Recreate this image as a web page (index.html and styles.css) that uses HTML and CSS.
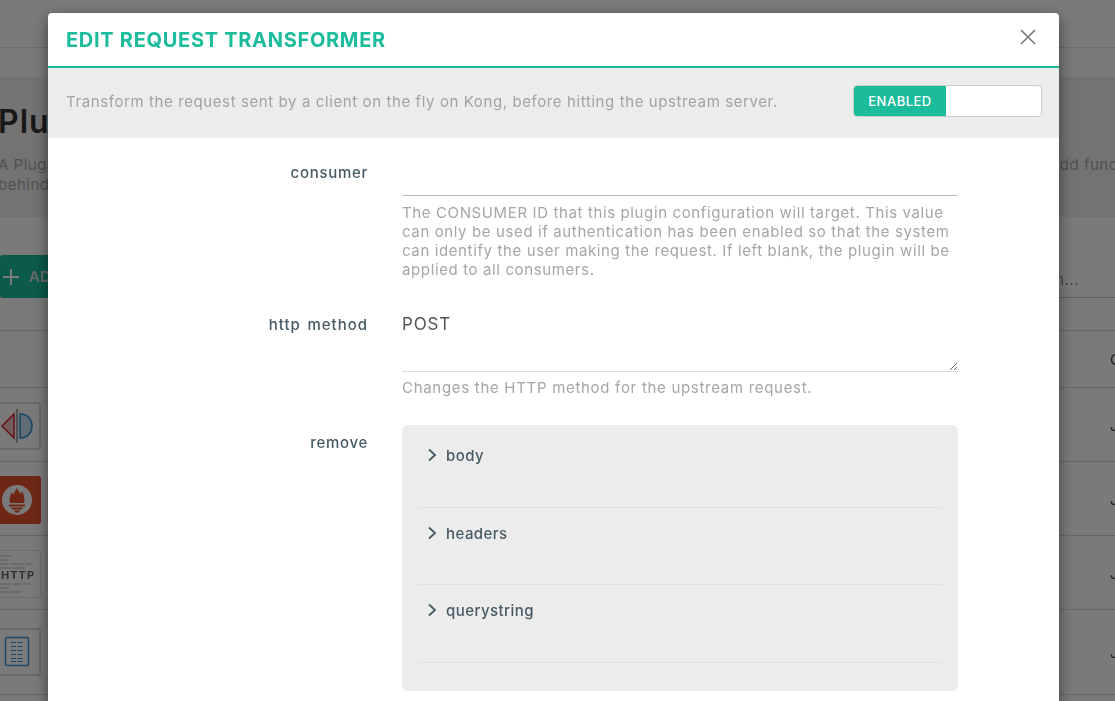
FILE: index.html
```html
<!DOCTYPE html>
<html lang="en">

<head>
    <meta charset="UTF-8">
    <title>Edit Request Transformer</title>
    <link rel="stylesheet" href="styles.css">
</head>

<body>

    <!-- page behind the modal -->
    <div class="page">
        <div class="topbar"></div>
        <div class="subbar"></div>
        <div class="page-head">
            <h1>Plugins</h1>
            <p class="page-line"><span>A Plugin entity</span><span>add functionality</span></p>
            <p class="page-line"><span>behind Kong</span></p>
        </div>
        <div class="toolbar">
            <div class="add-btn">
                <svg width="18" height="18" viewBox="0 0 18 18"><path d="M9 1 V17 M1 9 H17" stroke="#fff" stroke-width="2" /></svg>
                <span>ADD</span>
            </div>
            <div class="search">Search...</div>
        </div>
        <div class="table-row row-head"><span></span><span class="cell-end">Created</span></div>
        <div class="table-row">
            <div class="plugin-icon">
                <svg width="48" height="48" viewBox="0 0 48 48">
                    <path d="M21 12 L9 24 L21 36 Z" fill="#f0c4c4" stroke="#d3202c" stroke-width="1.500" />
                    <path d="M24 7 V41" stroke="#aaa" stroke-width="2" />
                    <path d="M27 12 C43 12 43 36 27 36 Z" fill="#cfe4f4" stroke="#2f8fd0" stroke-width="1.500" />
                </svg>
            </div>
            <span class="cell-end">Jan</span>
        </div>
        <div class="table-row">
            <div class="plugin-icon icon-red">
                <svg width="48" height="48" viewBox="0 0 48 48">
                    <circle cx="24" cy="24" r="15" fill="#fff" />
                    <path d="M24 12 C25 15 27 15 27 18 C28 17 29 16 29 15 C31 19 32 22 31 27 H17 C16 23 17 20 19 16 C20 18 20 18 21 18 C21 16 23 14 24 12 Z" fill="#e6522c" />
                    <path d="M16 28.500 H32 V30.500 H16 Z M18 31.500 H30 L29 33.500 H19 Z M21 34.500 H27 L26 36.500 H22 Z" fill="#e6522c" />
                </svg>
            </div>
            <span class="cell-end">Jan</span>
        </div>
        <div class="table-row">
            <div class="plugin-icon icon-http">
                <svg width="48" height="46" viewBox="0 0 48 46">
                    <path d="M4 5 H18 M4 9 H14 M4 13 H16 M18 13 H30 M32 13 H40 M4 17 H18 M20 17 H32" stroke="#cfd4d8" stroke-width="1.500" />
                    <text x="8" y="28" class="http-label">HTTP</text>
                    <path d="M4 33 H18 M20 33 H28 M30 33 H38 M4 37 H16 M4 41 H14 M16 41 H28" stroke="#cfd4d8" stroke-width="1.500" />
                </svg>
            </div>
            <span class="cell-end">Jan</span>
        </div>
        <div class="table-row row-last">
            <div class="plugin-icon">
                <svg width="48" height="48" viewBox="0 0 48 48">
                    <rect x="12.500" y="9.500" width="23" height="28" rx="1.500" fill="#fff" stroke="#3d97dc" stroke-width="1.500" />
                    <path d="M18 14.500 H30 M18 18.500 H30 M18 22.500 H30 M18 26.500 H30 M18 30.500 H30 M18 33.500 H30" stroke="#3d97dc" stroke-width="1.200" stroke-dasharray="5 1.500" />
                </svg>
            </div>
            <span class="cell-end">Jan</span>
        </div>
    </div>

    <div class="backdrop"></div>

    <div class="modal">
        <div class="modal-header">
            <h2>EDIT REQUEST TRANSFORMER</h2>
            <svg class="close" width="18" height="18" viewBox="0 0 18 18">
                <path d="M2 2 L16 16 M16 2 L2 16" stroke="#777" stroke-width="1.600" fill="none" />
            </svg>
        </div>
        <div class="modal-intro">
            <p>Transform the request sent by a client on the fly on Kong, before hitting the upstream server.</p>
            <div class="toggle">
                <span class="toggle-on">ENABLED</span>
                <span class="toggle-off"></span>
            </div>
        </div>
        <div class="modal-body">
            <div class="field field-consumer">
                <label>consumer</label>
                <div class="field-main">
                    <input type="text" class="text-input">
                    <p class="help">The CONSUMER ID that this plugin configuration will target. This value can only be used if authentication has been enabled so that the system can identify the user making the request. If left blank, the plugin will be applied to all consumers.</p>
                </div>
            </div>
            <div class="field field-method">
                <label class="label-method">http method</label>
                <div class="field-main">
                    <textarea class="text-area">POST</textarea>
                    <p class="help help-method">Changes the HTTP method for the upstream request.</p>
                </div>
            </div>
            <div class="field">
                <label class="label-remove">remove</label>
                <div class="field-main">
                    <div class="group">
                        <div class="group-item">
                            <svg class="chevron" width="10" height="14" viewBox="0 0 10 14"><path d="M2 1.500 L8 7 L2 12.500" /></svg>
                            <span>body</span>
                        </div>
                        <div class="group-item">
                            <svg class="chevron" width="10" height="14" viewBox="0 0 10 14"><path d="M2 1.500 L8 7 L2 12.500" /></svg>
                            <span>headers</span>
                        </div>
                        <div class="group-item">
                            <svg class="chevron" width="10" height="14" viewBox="0 0 10 14"><path d="M2 1.500 L8 7 L2 12.500" /></svg>
                            <span>querystring</span>
                        </div>
                    </div>
                </div>
            </div>
        </div>
    </div>

</body>

</html>
```

FILE: styles.css
```css
html,
body {
    margin: 0;
    padding: 0;
    height: 100%;
    overflow: hidden;
}

body {
    background-color: #fff;
    font-family: Inter, "Open Sans", sans-serif;
    color: #455a64;
}

/* page behind */
.page {
    width: 1115px;
    filter: blur(0.7px);
}

.topbar {
    height: 47px;
    border-bottom: 1px solid #e0e0e0;
}

.subbar {
    height: 29px;
}

.page-head {
    height: 140px;
    background-color: #f0f0f0;
    overflow: hidden;
    white-space: nowrap;
}

.page-head h1 {
    margin: 23px 0 11px -2px;
    font-size: 32px;
    line-height: 44px;
    font-weight: 600;
    letter-spacing: 1px;
    color: #333;
}

.page-line {
    display: flex;
    justify-content: space-between;
    width: 1180px;
    margin: 0 0 0 -2px;
    font-size: 15px;
    line-height: 20px;
    letter-spacing: 0.5px;
    color: #aaa;
}

.toolbar {
    display: flex;
    justify-content: space-between;
    align-items: center;
    height: 80px;
    border-bottom: 1px solid #ccc;
}

.add-btn {
    display: flex;
    align-items: center;
    gap: 9px;
    margin-top: 39px;
    height: 43px;
    width: 100px;
    padding-left: 2px;
    border-radius: 3px;
    background-color: #1abc9c;
    color: #ddd;
    font-size: 15px;
    font-weight: 600;
    box-sizing: border-box;
}

.search {
    margin-top: 44px;
    margin-right: 36px;
    font-size: 15px;
    letter-spacing: 0.5px;
    color: #999;
}

.table-row {
    display: flex;
    justify-content: space-between;
    align-items: center;
    box-sizing: border-box;
    height: 74px;
    padding-top: 2px;
    border-bottom: 1px solid #d8d8d8;
    overflow: hidden;
    white-space: nowrap;
}

.row-head {
    height: 58px;
    margin-top: 32px;
    padding-top: 0;
    border-top: 1px solid #d8d8d8;
}

.row-last {
    height: 85px;
    padding-top: 0;
}

.cell-end {
    width: 5px;
    overflow: hidden;
    font-size: 15px;
    color: #37474f;
}

.plugin-icon {
    display: flex;
    align-items: center;
    justify-content: center;
    box-sizing: border-box;
    width: 48px;
    height: 48px;
    margin-left: -7px;
    border: 2px solid #ddd;
    border-radius: 3px;
    background-color: #fff;
}

.plugin-icon svg {
    flex: none;
}

.icon-red {
    border: 0;
    background-color: #e6522c;
}

.icon-http {
    border: 1px solid #dde3e8;
}

.http-label {
    font-family: Inter, "Open Sans", sans-serif;
    font-size: 11px;
    font-weight: 700;
    letter-spacing: 1px;
    fill: #666;
}

/* dim layer */
.backdrop {
    position: fixed;
    left: 0;
    top: 0;
    width: 100%;
    height: 100%;
    background-color: rgba(0, 0, 0, 0.52);
}

/* modal */
.modal {
    position: fixed;
    left: 48px;
    top: 13px;
    width: 1011px;
    height: 720px;
    border-radius: 4px;
    background-color: #fff;
    box-shadow: 0 5px 15px rgba(0, 0, 0, 0.5);
}

.modal-header {
    display: flex;
    justify-content: space-between;
    align-items: center;
    box-sizing: border-box;
    height: 55px;
    padding: 1px 30px 0 18px;
    border-bottom: 2px solid #1abc9c;
}

.modal-header h2 {
    margin: 0;
    font-size: 20px;
    line-height: 28px;
    font-weight: 700;
    letter-spacing: 0.7px;
    color: #1abc9c;
}

.close {
    margin-bottom: 6px;
    margin-right: -8px;
}

.modal-intro {
    display: flex;
    justify-content: space-between;
    align-items: center;
    box-sizing: border-box;
    height: 70px;
    padding: 0 17px 4px 18px;
    background-color: #ececec;
}

.modal-intro p {
    margin: 0;
    font-size: 15px;
    letter-spacing: 0.6px;
    color: #a3a3a3;
}

.toggle {
    display: flex;
    box-sizing: border-box;
    width: 189px;
    height: 32px;
    border: 1px solid #ccc;
    border-radius: 4px;
    background-color: #fff;
    overflow: hidden;
}

.toggle-on {
    display: flex;
    align-items: center;
    justify-content: center;
    width: 92px;
    background-color: #1abc9c;
    color: #fff;
    font-size: 13px;
    font-weight: 500;
    letter-spacing: 0.5px;
}

.field {
    display: flex;
    gap: 34px;
}

.field label {
    width: 320px;
    text-align: right;
    font-size: 15px;
    font-weight: 500;
    line-height: 20px;
    letter-spacing: 0.7px;
    color: #455a64;
}

.field-consumer {
    padding-top: 25px;
}

.field-method {
    padding-top: 34px;
}

.field .label-method {
    padding-top: 2px;
    letter-spacing: 1px;
    word-spacing: 1.500px;
}

.label-remove {
    padding-top: 36px;
}

.field-main {
    width: 556px;
}

.text-input {
    display: block;
    box-sizing: border-box;
    width: 100%;
    height: 33px;
    padding: 0;
    border: none;
    border-bottom: 1px solid #bbb;
    outline: none;
    background: none;
}

.text-area {
    display: block;
    box-sizing: border-box;
    width: 100%;
    height: 59px;
    padding: 0;
    border: none;
    border-bottom: 1px solid #ddd;
    outline: none;
    background: none;
    font-family: Inter, "Open Sans", sans-serif;
    font-size: 17px;
    line-height: 22px;
    letter-spacing: 0.8px;
    color: #555;
}

.help {
    margin: 7px 0 0;
    font-size: 15px;
    line-height: 19px;
    letter-spacing: 0.62px;
    color: #a6a6a6;
}

.help-method {
    margin-top: 6px;
    letter-spacing: 0.7px;
}

.group {
    box-sizing: border-box;
    height: 266px;
    margin-top: 28px;
    padding: 5px 16px 0;
    border-radius: 6px;
    background-color: #ececec;
}

.group-item {
    display: flex;
    align-items: flex-start;
    gap: 9px;
    box-sizing: border-box;
    height: 77.500px;
    padding: 16px 0 0 9px;
    border-bottom: 1px solid #e0e0e0;
    font-size: 15px;
    font-weight: 500;
    line-height: 20px;
    letter-spacing: 0.45px;
    color: #455a64;
}

.chevron {
    margin-top: 2px;
    fill: none;
    stroke: #455a64;
    stroke-width: 1.800;
}
```
